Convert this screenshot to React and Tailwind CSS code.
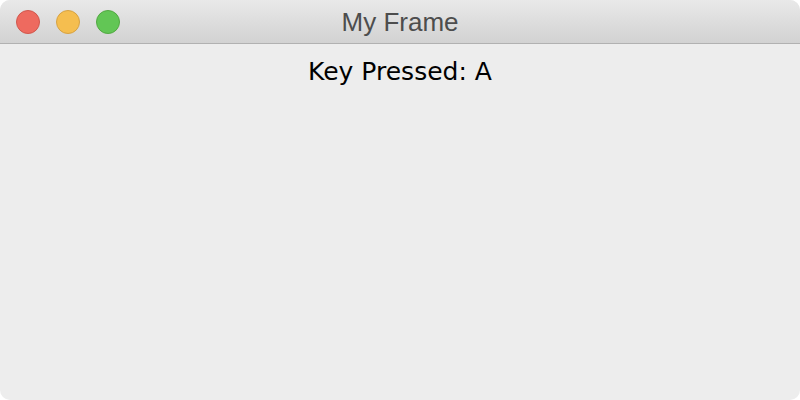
export default function App() {
  return (
    <div className="w-[800px] h-[400px] bg-white">
      <div className="w-full h-full rounded-[10px] overflow-hidden flex flex-col bg-[#ededed]">
        <div className="relative h-[44px] shrink-0 flex items-center justify-center bg-gradient-to-b from-[#e9e9e9] to-[#d2d2d2] border-b border-[#b1b1b1]">
          <div className="absolute left-[16px] top-[10px] flex gap-[16px]">
            <span className="w-[24px] h-[24px] rounded-full bg-[#ee6a5f] border border-[#d0574d]" />
            <span className="w-[24px] h-[24px] rounded-full bg-[#f5be4f] border border-[#d6a243]" />
            <span className="w-[24px] h-[24px] rounded-full bg-[#62c655] border border-[#52a842]" />
          </div>
          <span className="text-[26px] leading-[29px] pt-[1px] text-[#4d4d4d] font-['Liberation_Sans',sans-serif]">
            My Frame
          </span>
        </div>
        <div className="flex justify-center pt-[14px]">
          <span className="text-[25px] text-black font-['DejaVu_Sans',sans-serif] leading-[28px]">
            Key Pressed: A
          </span>
        </div>
      </div>
    </div>
  );
}
